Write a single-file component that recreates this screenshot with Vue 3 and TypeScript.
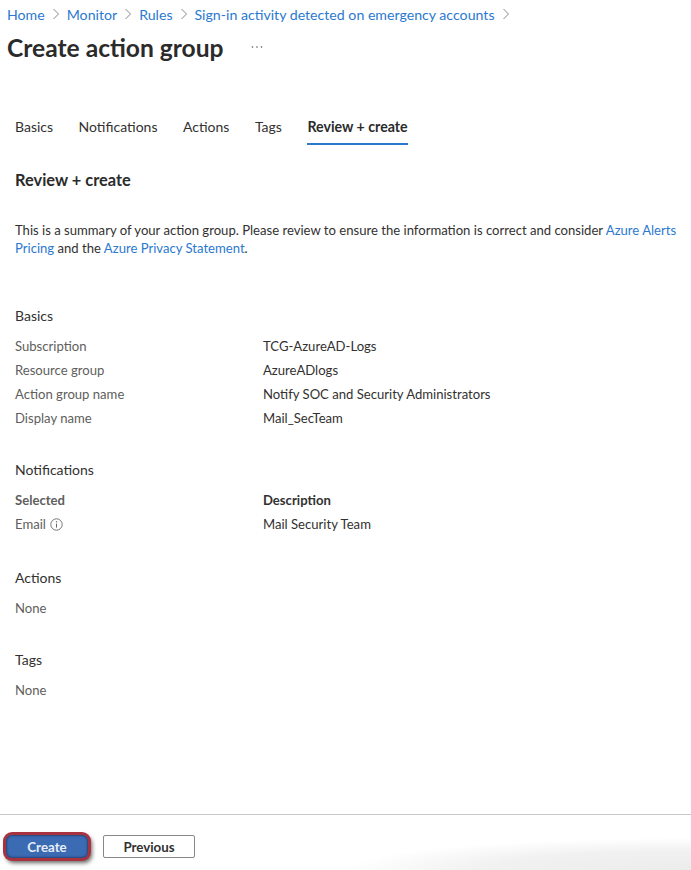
<script setup lang="ts">
interface Row { label: string; value: string }
const crumbs: string[] = ['Home', 'Monitor', 'Rules', 'Sign-in activity detected on emergency accounts']
const tabs: string[] = ['Basics', 'Notifications', 'Actions', 'Tags', 'Review + create']
const basics: Row[] = [
  { label: 'Subscription', value: 'TCG-AzureAD-Logs' },
  { label: 'Resource group', value: 'AzureADlogs' },
  { label: 'Action group name', value: 'Notify SOC and Security Administrators' },
  { label: 'Display name', value: 'Mail_SecTeam' },
]
</script>

<template>
  <div class="page">
    <nav class="crumbs">
      <template v-for="c in crumbs" :key="c">
        <a class="link">{{ c }}</a>
        <svg class="chev" width="8" height="12" viewBox="0 0 8 12"><path d="M1.5 1 6.5 6l-5 5" fill="none" stroke="#8a8a8a" stroke-width="1" /></svg>
      </template>
    </nav>
    <header class="title-row">
      <h1>Create action group</h1>
      <svg class="more" width="12" height="4" viewBox="0 0 12 4"><circle cx="1.5" cy="2" r="0.8" fill="#555" /><circle cx="6" cy="2" r="0.8" fill="#555" /><circle cx="10.5" cy="2" r="0.8" fill="#555" /></svg>
    </header>

    <div class="tabs">
      <span v-for="t in tabs" :key="t" class="tab" :class="{ active: t === 'Review + create' }">{{ t }}</span>
    </div>

    <main class="content">
      <h2>Review + create</h2>
      <p class="intro">This is a summary of your action group. Please review to ensure the information is correct and consider <a class="link">Azure Alerts</a> <a class="link">Pricing</a> and the <a class="link">Azure Privacy Statement</a>.</p>

      <section class="basics">
        <h3>Basics</h3>
        <div v-for="r in basics" :key="r.label" class="row">
          <span class="label">{{ r.label }}</span><span class="value">{{ r.value }}</span>
        </div>
      </section>

      <section class="notifications">
        <h3>Notifications</h3>
        <div class="row">
          <b class="label">Selected</b><b class="value">Description</b>
        </div>
        <div class="row">
          <span class="label email">Email
            <svg width="13" height="13" viewBox="0 0 13 13"><circle cx="6.5" cy="6.5" r="5.7" fill="none" stroke="#666" stroke-width="0.9" /><path d="M6.5 5.6v4" stroke="#666" stroke-width="1" /><circle cx="6.5" cy="3.8" r="0.7" fill="#666" /></svg>
          </span><span class="value">Mail Security Team</span>
        </div>
      </section>

      <section class="actions">
        <h3>Actions</h3>
        <div class="row"><span class="label">None</span></div>
      </section>

      <section class="tags">
        <h3>Tags</h3>
        <div class="row"><span class="label">None</span></div>
      </section>
    </main>

    <footer class="footer">
      <button class="btn primary">Create</button>
      <button class="btn">Previous</button>
    </footer>
  </div>
</template>

<style>
html, body { margin: 0; background: #fff; overflow: hidden; }
</style>

<style scoped>
.page {
  width: 691px;
  height: 870px;
  display: flex;
  flex-direction: column;
  font-family: Lato, Roboto, sans-serif;
  font-size: 13.1px;
  color: #323130;
  overflow: hidden;
  background: #fff;
}
.link { color: #2b79cf; }
.crumbs {
  display: flex;
  align-items: center;
  height: 20px;
  margin-top: 4px;
  padding-left: 7px;
  gap: 7px;
  font-size: 14.15px;
}
.title-row {
  display: flex;
  align-items: center;
  height: 36px;
  margin-top: 5px;
  padding-left: 7px;
}
h1 {
  margin: 0;
  font-size: 24.6px;
  font-weight: 700;
  color: #2b2b2b;
}
.more { margin-left: 27px; }
.tabs {
  display: flex;
  gap: 25.5px;
  margin-top: 45px;
  padding-left: 15px;
  height: 36px;
  font-size: 14px;
}
.tab { display: block; height: 33px; line-height: 34px; border-bottom: 2px solid transparent; }
.active { font-weight: 700; font-size: 14.2px; border-bottom-color: #2b79cf; color: #2b2b2b; }
.content { flex: 1; padding: 0 14px 0 15px; }
h2 { margin: 22px 0 0; font-size: 16.4px; line-height: 24px; font-weight: 700; color: #2b2b2b; }
.intro { margin: 29px 0 0; line-height: 18px; }
h3 { margin: 0; font-size: 14px; font-weight: 400; line-height: 20px; }
.basics { margin-top: 49px; }
.basics h3, .notifications h3, .actions h3, .tags h3 { margin-bottom: 8px; }
.notifications { margin-top: 30px; }
.actions { margin-top: 32px; }
.tags { margin-top: 30px; }
.row { display: flex; height: 24px; align-items: center; }
.label { width: 248px; color: #605e5c; flex: none; }
.value { color: #323130; }
.email { display: flex; align-items: center; gap: 4px; }
.footer {
  height: 56px;
  box-sizing: border-box;
  border-top: 1px solid #c8c8c8;
  display: flex;
  align-items: flex-start;
  gap: 15px;
  padding: 20px 0 0 6px;
  background: radial-gradient(ellipse 345px 32px at 100% 100%, #ececec 0%, #f1f1f1 60%, #fff 100%);
}
.btn {
  box-sizing: border-box;
  width: 92px;
  height: 23px;
  border: 1px solid #8a8886;
  border-radius: 2px;
  background: #fff;
  font: 700 13.3px Lato, sans-serif;
  color: #323130;
  padding: 0;
}
.primary {
  width: 82px;
  background: #3b6bb2;
  color: #e8eef7;
  border: none;
  border-radius: 6px;
  box-shadow: inset 0 0 2px 1px #27457a, 0 0 0 3px #a8333f, 2px 3px 4px 2px rgba(0,0,0,.6);
}
</style>
